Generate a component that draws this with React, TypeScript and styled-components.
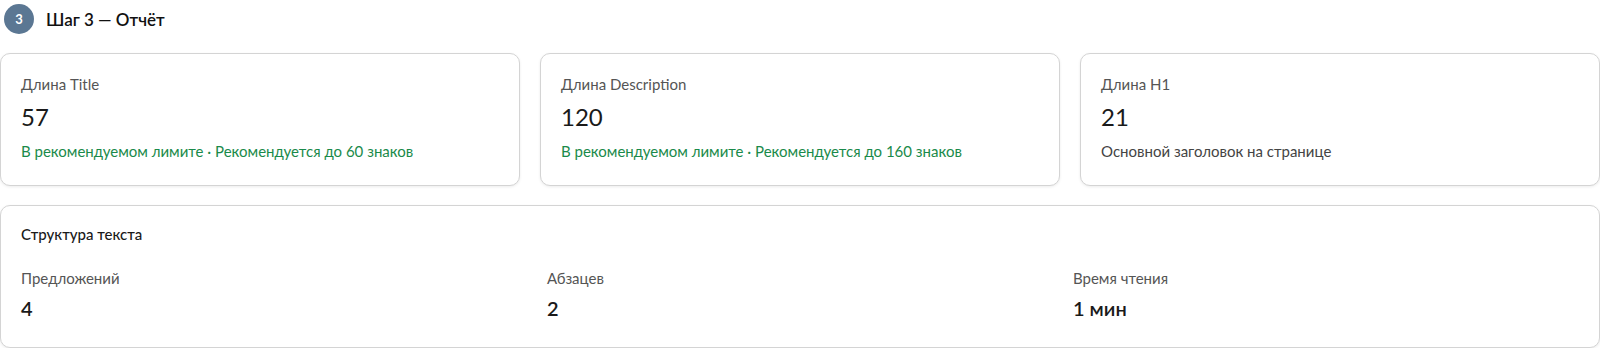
import React from "react";
import { styled, createGlobalStyle } from "styled-components";

const GlobalStyle = createGlobalStyle`
  * { box-sizing: border-box; }
  body {
    margin: 0;
    background: #ffffff;
    font-family: Lato, "Noto Sans", sans-serif;
    color: #1f1f1f;
  }
`;

const metrics = [
  {
    label: "Длина Title",
    value: "57",
    note: "В рекомендуемом лимите · Рекомендуется до 60 знаков",
    ok: true,
  },
  {
    label: "Длина Description",
    value: "120",
    note: "В рекомендуемом лимите · Рекомендуется до 160 знаков",
    ok: true,
  },
  {
    label: "Длина H1",
    value: "21",
    note: "Основной заголовок на странице",
    ok: false,
  },
];

const structure = [
  { label: "Предложений", value: "4" },
  { label: "Абзацев", value: "2" },
  { label: "Время чтения", value: "1 мин" },
];

export default function App() {
  return (
    <>
      <GlobalStyle />
      <Report>
        <StepHeader>
          <StepBadge>3</StepBadge>
          <StepTitle>Шаг 3 — Отчёт</StepTitle>
        </StepHeader>
        <CardsRow>
          {metrics.map((m) => (
            <Card key={m.label}>
              <Label>{m.label}</Label>
              <BigValue>{m.value}</BigValue>
              <Note $ok={m.ok}>{m.note}</Note>
            </Card>
          ))}
        </CardsRow>
        <StructureCard>
          <CardTitle>Структура текста</CardTitle>
          <StatsGrid>
            {structure.map((s) => (
              <Stat key={s.label}>
                <Label>{s.label}</Label>
                <StatValue>{s.value}</StatValue>
              </Stat>
            ))}
          </StatsGrid>
        </StructureCard>
      </Report>
    </>
  );
}

const Report = styled.section`
  width: 1600px;
  display: flex;
  flex-direction: column;
  gap: 19px;
  padding-top: 4px;
`;

const StepHeader = styled.div`
  display: flex;
  align-items: center;
  gap: 12px;
  padding-left: 4px;
  height: 30px;
`;

const StepBadge = styled.span`
  width: 30px;
  height: 30px;
  border-radius: 50%;
  background: #5b7793;
  color: #ffffff;
  display: flex;
  align-items: center;
  justify-content: center;
  font-size: 13px;
  font-weight: 700;
`;

const StepTitle = styled.h3`
  margin: 0;
  font-size: 17px;
  font-weight: 600;
  color: #111111;
`;

const CardsRow = styled.div`
  display: grid;
  grid-template-columns: repeat(3, 1fr);
  gap: 20px;
`;

const Card = styled.div`
  border: 1px solid #d4d4d4;
  border-radius: 10px;
  background: #ffffff;
  box-shadow: 0 1px 3px rgba(0, 0, 0, 0.08);
  padding: 20px 20px 22px;
  height: 133px;
`;

const Label = styled.div`
  font-size: 15px;
  line-height: 20px;
  color: #555555;
`;

const BigValue = styled.div`
  font-size: 24px;
  line-height: 30px;
  margin-top: 8px;
  color: #1a1a1a;
`;

const Note = styled.div<{ $ok: boolean }>`
  font-size: 15px;
  line-height: 20px;
  margin-top: 9px;
  color: ${(p) => (p.$ok ? "#1a8a4a" : "#444444")};
`;

const StructureCard = styled(Card)`
  height: 143px;
  padding: 18px 20px 20px;
`;

const CardTitle = styled.div`
  font-size: 15px;
  line-height: 20px;
  font-weight: 500;
  color: #1a1a1a;
`;

const StatsGrid = styled.div`
  display: grid;
  grid-template-columns: repeat(3, 1fr);
  gap: 20px;
  margin-top: 24px;
`;

const Stat = styled.div`
  display: flex;
  flex-direction: column;
  gap: 8px;
`;

const StatValue = styled.div`
  font-size: 20px;
  line-height: 24px;
  font-weight: 600;
  color: #1a1a1a;
`;
